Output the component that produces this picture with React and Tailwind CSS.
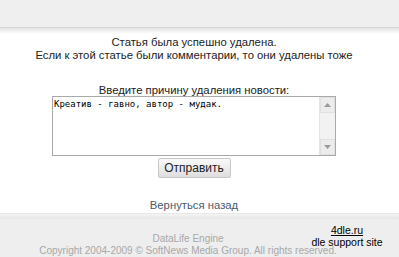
export default function App() {
  const f = { fontFamily: '"Liberation Sans", Tahoma, sans-serif' };
  return (
    <div className="w-[399px] h-[257px] overflow-hidden bg-white flex flex-col" style={f}>
      <div className="h-[27px] bg-[#efefef] shrink-0" />
      <div className="h-px bg-[#d6d6d6] shrink-0" />
      <div className="h-[6px] bg-gradient-to-b from-[#e4e4e4] to-white shrink-0" />
      <div className="flex flex-col items-center text-[11.3px] leading-[13px] text-[#222] pt-[2px] pr-[11px]">
        <div>Статья была успешно удалена.</div>
        <div>Если к этой статье были комментарии, то они удалены тоже</div>
        <div className="mt-[22px] leading-[12px]">Введите причину удаления новости:</div>
        <div className="w-[284px] h-[60px] border border-[#a9a9a9] bg-white flex">
          <div className="flex-1 text-[9px] leading-[12px] pl-[1px] pt-[1px] text-black" style={{ fontFamily: '"DejaVu Sans Mono", monospace' }}>
            Креатив - гавно, автор - мудак.
          </div>
          <div className="w-[16px] bg-[#f2f2f2] border-l border-[#e4e4e4] flex flex-col justify-between">
            <div className="h-[16px] bg-[#ececec] border border-[#e0e0e0] flex items-center justify-center">
              <svg width="7" height="4" viewBox="0 0 7 4"><path d="M0 4 L3.5 0 L7 4Z" fill="#9a9a9a" /></svg>
            </div>
            <div className="h-[16px] bg-[#ececec] border border-[#e0e0e0] flex items-center justify-center">
              <svg width="7" height="4" viewBox="0 0 7 4"><path d="M0 0 L3.5 4 L7 0Z" fill="#9a9a9a" /></svg>
            </div>
          </div>
        </div>
        <div className="mt-[2px] w-[73px] h-[20px] border border-[#c8c8c8] rounded-[2px] bg-gradient-to-b from-[#fafafa] to-[#dedede] flex items-center justify-center text-[12px] text-[#222]">
          Отправить
        </div>
        <div className="mt-[21px] text-[11.3px] text-[#4b5a6b]">Вернуться назад</div>
      </div>
      <div className="mt-[1px] h-[6px] bg-gradient-to-b from-[#f4f4f4] to-[#e6e6e6] shrink-0 border-t border-[#e8e8e8]" />
      <div className="flex-1 bg-[#eeeeee] relative text-[10px] leading-[12px]">
        <div className="absolute left-0 right-0 top-[14px] flex flex-col items-center text-[#a8a8a8] pr-[23px]">
          <div>DataLife Engine</div>
          <div>Copyright 2004-2009 © SoftNews Media Group. All rights reserved.</div>
        </div>
        <div className="absolute left-[313px] w-[68px] top-[5px] flex flex-col items-center text-black text-[10.5px] leading-[12px] whitespace-nowrap">
          <div className="underline">4dle.ru</div>
          <div>dle support site</div>
        </div>
      </div>
    </div>
  );
}
